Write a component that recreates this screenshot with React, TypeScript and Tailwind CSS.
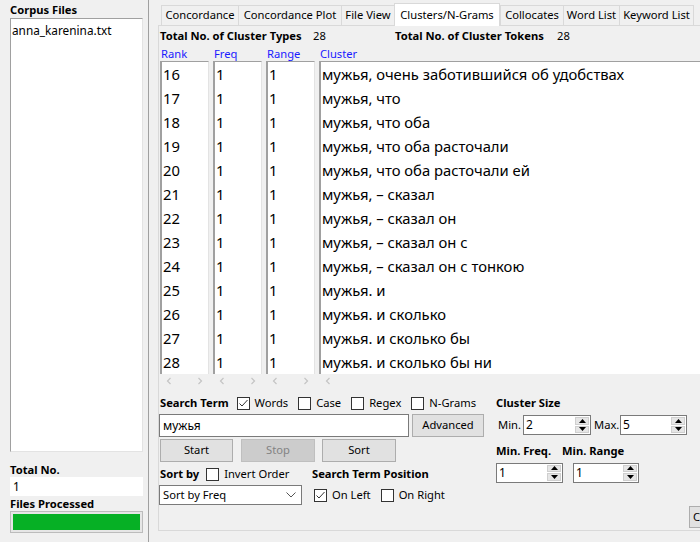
import React from "react";

function Check({ checked }: { checked?: boolean }) {
  return (
    <span className="w-[13px] h-[13px] border border-[#333333] bg-white flex items-center justify-center shrink-0">
      {checked && (
        <svg width="11" height="11" viewBox="0 0 11 11">
          <path d="M1.5 5.5 L4 8 L9.5 2" stroke="#333333" strokeWidth="1" fill="none" />
        </svg>
      )}
    </span>
  );
}

function Spin({ value, w }: { value: string; w: string }) {
  return (
    <div className={`${w} h-[20px] border border-[#7a7a7a] bg-white flex shrink-0`}>
      <div className="flex-1 pl-[2px] leading-[18px] text-[12px]">{value}</div>
      <div className="w-[16px] flex flex-col p-[1px] gap-[1px]">
        <div className="flex-1 bg-[#e6e6e6] border border-[#cfcfcf] flex items-center justify-center">
          <svg width="7" height="4" viewBox="0 0 7 4">
            <path d="M0 4 L3.5 0 L7 4 Z" fill="#000" />
          </svg>
        </div>
        <div className="flex-1 bg-[#e6e6e6] border border-[#cfcfcf] flex items-center justify-center">
          <svg width="7" height="4" viewBox="0 0 7 4">
            <path d="M0 0 L3.5 4 L7 0 Z" fill="#000" />
          </svg>
        </div>
      </div>
    </div>
  );
}

function Arrow({ dir }: { dir: "l" | "r" }) {
  return (
    <svg width="6" height="8" viewBox="0 0 6 8">
      <path
        d={dir === "l" ? "M4.5 1 L1.5 4 L4.5 7" : "M1.5 1 L4.5 4 L1.5 7"}
        stroke="#c4c4c4"
        strokeWidth="1.2"
        fill="none"
      />
    </svg>
  );
}

function Btn({ label, w, disabled }: { label: string; w: string; disabled?: boolean }) {
  return (
    <div
      className={`${w} h-[23px] shrink-0 flex items-center justify-center border ${
        disabled ? "bg-[#cccccc] border-[#bfbfbf] text-[#838383]" : "bg-[#e1e1e1] border-[#adadad] text-black"
      }`}
    >
      {label}
    </div>
  );
}

const rows: [string, string][] = [
  ["16", "мужья, очень заботившийся об удобствах"],
  ["17", "мужья, что"],
  ["18", "мужья, что оба"],
  ["19", "мужья, что оба расточали"],
  ["20", "мужья, что оба расточали ей"],
  ["21", "мужья, – сказал"],
  ["22", "мужья, – сказал он"],
  ["23", "мужья, – сказал он с"],
  ["24", "мужья, – сказал он с тонкою"],
  ["25", "мужья. и"],
  ["26", "мужья. и сколько"],
  ["27", "мужья. и сколько бы"],
  ["28", "мужья. и сколько бы ни"],
];

function Column({
  header,
  values,
  w,
  showRight = true,
}: {
  header: string;
  values: string[];
  w: string;
  showRight?: boolean;
}) {
  return (
    <div className={`${w} shrink-0 flex flex-col`}>
      <div className="h-[15px] leading-[15px] text-[#1a1aff] pl-[1px]">{header}</div>
      <div className="h-[313px] bg-white border-t border-t-[#a0a0a0] border-l-2 border-l-[#a0a0a0] border-r border-r-[#e3e3e3] overflow-hidden pl-[1px] text-[14.8px]">
        {values.map((v, i) => (
          <div key={i} className="h-[24px] leading-[24px] whitespace-nowrap">
            {v}
          </div>
        ))}
      </div>
      <div className="h-[14px] flex items-center justify-between px-[6px]">
        <Arrow dir="l" />
        {showRight && <Arrow dir="r" />}
      </div>
    </div>
  );
}

export default function App() {
  const tabs: [string, string, boolean][] = [
    ["Concordance", "w-[77px]", false],
    ["Concordance Plot", "w-[103px]", false],
    ["File View", "w-[53px]", false],
    ["Clusters/N-Grams", "w-[106px]", true],
    ["Collocates", "w-[63px]", false],
    ["Word List", "w-[56px]", false],
    ["Keyword List", "w-[75px]", false],
  ];
  return (
    <div className="w-[700px] h-[542px] overflow-hidden bg-[#f0f0f0] flex font-['Noto_Sans',sans-serif] text-[11.2px] text-black">
      {/* Left panel */}
      <div className="w-[149px] shrink-0 border-r border-[#a0a0a0] pl-[10px] pr-[5px] flex flex-col">
        <div className="h-[16px] mt-[2px] leading-[16px] font-bold">Corpus Files</div>
        <div className="h-[434px] bg-white border-t border-l border-[#a0a0a0] border-r border-r-[#e3e3e3] border-b border-b-[#e3e3e3] text-[11.8px] leading-[20px] pl-[1px] pt-[1px]">
          anna_karenina.txt
        </div>
        <div className="mt-[10px] h-[15px] leading-[15px] font-bold">Total No.</div>
        <div className="h-[19px] bg-white pl-[3px] text-[11.8px] leading-[19px]">1</div>
        <div className="h-[15px] leading-[15px] font-bold">Files Processed</div>
        <div className="h-[22px] border border-[#bcbcbc] bg-[#e6e6e6] p-[2px]">
          <div className="w-full h-full bg-[#06b025]" />
        </div>
      </div>

      {/* Right side */}
      <div className="w-[600px] shrink-0 pl-[9px] flex flex-col">
        {/* Tabs */}
        <div className="h-[25px] flex items-end pl-[3px]">
          {tabs.map(([label, w, sel], i) =>
            sel ? (
              <div
                key={label}
                className={`${w} h-[23px] -mb-px relative z-10 bg-white border border-b-0 border-[#d9d9d9] flex items-center justify-center shrink-0`}
              >
                {label}
              </div>
            ) : (
              <div
                key={label}
                className={`${w} h-[20px] bg-[#f0f0f0] border-t border-l border-[#d9d9d9] ${
                  i === tabs.length - 1 ? "border-r" : ""
                } flex items-center justify-center shrink-0`}
              >
                {label}
              </div>
            )
          )}
        </div>

        {/* Pane */}
        <div className="w-[600px] h-[506px] border-t border-l border-b border-[#d9d9d9] pl-[1px] flex flex-col">
          {/* Totals */}
          <div className="mt-[2px] h-[16px] flex items-center whitespace-nowrap">
            <div className="w-[153px] font-bold">Total No. of Cluster Types</div>
            <div className="w-[82px]">28</div>
            <div className="w-[162px] font-bold">Total No. of Cluster Tokens</div>
            <div>28</div>
          </div>

          {/* Lists */}
          <div className="mt-[2px] flex gap-[4px]">
            <Column header="Rank" w="w-[49px]" values={rows.map((r) => r[0])} />
            <Column header="Freq" w="w-[49px]" values={rows.map(() => "1")} />
            <Column header="Range" w="w-[49px]" values={rows.map(() => "1")} />
            <Column header="Cluster" w="w-[420px]" values={rows.map((r) => r[1])} showRight={false} />
          </div>

          {/* Bottom controls */}
          <div className="flex">
            <div className="w-[336px] shrink-0 flex flex-col">
              <div className="mt-[7px] h-[17px] flex items-center whitespace-nowrap">
                <span className="font-bold">Search Term</span>
                <span className="ml-[8px]"><Check checked /></span>
                <span className="ml-[5px]">Words</span>
                <span className="ml-[10px]"><Check /></span>
                <span className="ml-[5px]">Case</span>
                <span className="ml-[10px]"><Check /></span>
                <span className="ml-[5px]">Regex</span>
                <span className="ml-[10px]"><Check /></span>
                <span className="ml-[5px]">N-Grams</span>
              </div>
              <div className="mt-[2px] h-[23px] flex -ml-px gap-[3px]">
                <div className="w-[250px] h-[23px] bg-white border border-[#7a7a7a] pl-[3px] leading-[21px] text-[12px]">
                  мужья
                </div>
                <Btn label="Advanced" w="w-[72px]" />
              </div>
              <div className="mt-[2px] flex">
                <Btn label="Start" w="w-[73px]" />
                <div className="ml-[8px]">
                  <Btn label="Stop" w="w-[74px]" disabled />
                </div>
                <div className="ml-[7px]">
                  <Btn label="Sort" w="w-[74px]" />
                </div>
              </div>
              <div className="flex">
                <div className="w-[152px] shrink-0 flex flex-col">
                  <div className="mt-[4px] h-[17px] flex items-center whitespace-nowrap">
                    <span className="font-bold">Sort by</span>
                    <span className="ml-[7px]"><Check /></span>
                    <span className="ml-[5px]">Invert Order</span>
                  </div>
                  <div className="mt-[2px] -ml-px w-[143px] h-[20px] bg-white border border-[#7a7a7a] flex items-center justify-between pl-[3px] pr-[5px]">
                    <span>Sort by Freq</span>
                    <svg width="10" height="6" viewBox="0 0 10 6">
                      <path d="M0.5 0.5 L5 5 L9.5 0.5" stroke="#555" strokeWidth="1" fill="none" />
                    </svg>
                  </div>
                </div>
                <div className="flex flex-col">
                  <div className="mt-[4px] h-[17px] flex items-center font-bold whitespace-nowrap">Search Term Position</div>
                  <div className="mt-[2px] h-[20px] flex items-center whitespace-nowrap pl-[2px]">
                    <Check checked />
                    <span className="ml-[5px]">On Left</span>
                    <span className="ml-[10px]"><Check /></span>
                    <span className="ml-[5px]">On Right</span>
                  </div>
                </div>
              </div>
            </div>

            <div className="flex flex-col">
              <div className="mt-[7px] h-[17px] flex items-center font-bold">Cluster Size</div>
              <div className="mt-[3px] h-[20px] flex items-center whitespace-nowrap">
                <span className="ml-[2px] w-[25px]">Min.</span>
                <Spin value="2" w="w-[68px]" />
                <span className="ml-[3px] w-[26px]">Max.</span>
                <Spin value="5" w="w-[67px]" />
              </div>
              <div className="mt-[8px] h-[16px] flex items-center font-bold whitespace-nowrap">
                <span className="w-[66px]">Min. Freq.</span>
                <span>Min. Range</span>
              </div>
              <div className="mt-[4px] h-[19px] flex items-center gap-[10px]">
                <Spin value="1" w="w-[67px]" />
                <Spin value="1" w="w-[66px]" />
              </div>
              <div className="mt-[24px] ml-[193px] h-[22px] flex">
                <div className="h-[22px] border border-[#adadad] bg-[#e1e1e1] px-[3px] flex items-center whitespace-nowrap">
                  Clear
                </div>
              </div>
            </div>
          </div>
        </div>
      </div>
    </div>
  );
}
